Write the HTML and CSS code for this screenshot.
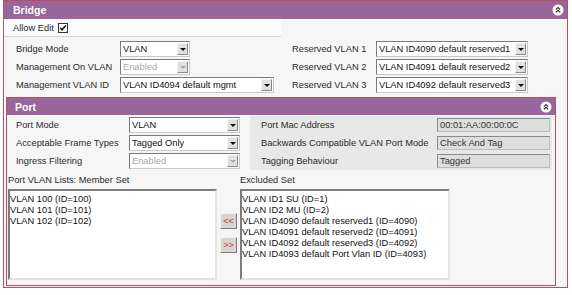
FILE: index.html
```html
<!DOCTYPE html>
<html lang="en">
<head>
  <meta charset="UTF-8">
  <title>Bridge Settings</title>
  <link rel="stylesheet" href="styles.css">
</head>
<body>
  <div class="panel bridge">
    <div class="panel-head">
      <span>Bridge</span>
      <svg class="collapse" width="12" height="12" viewBox="0 0 12 12"><circle cx="6" cy="6" r="5.5" fill="#fff"/><path d="M3.8 5.6 L6 3.6 L8.2 5.6 M3.8 8.2 L6 6.2 L8.2 8.2" fill="none" stroke="#333" stroke-width="1.2"/></svg>
    </div>

    <div class="allow-edit">
      Allow Edit
      <svg class="check" width="10" height="10" viewBox="0 0 10 10"><rect x="0.5" y="0.5" width="9" height="9" fill="#fff" stroke="#333"/><path d="M2.2 4.8 L4 6.8 L7.8 2.6" fill="none" stroke="#111" stroke-width="1.5"/></svg>
    </div>

    <!-- Bridge fields -->
    <div class="bridge-grid">
      <label>Bridge Mode</label>
      <div class="select short"><span>VLAN</span><i class="arrow"></i></div>
      <label>Reserved VLAN 1</label>
      <div class="select"><span>VLAN ID4090 default reserved1</span><i class="arrow"></i></div>

      <label>Management On VLAN</label>
      <div class="select short disabled"><span>Enabled</span><i class="arrow"></i></div>
      <label>Reserved VLAN 2</label>
      <div class="select"><span>VLAN ID4091 default reserved2</span><i class="arrow"></i></div>

      <label>Management VLAN ID</label>
      <div class="select mid"><span>VLAN ID4094 default mgmt</span><i class="arrow"></i></div>
      <label>Reserved VLAN 3</label>
      <div class="select"><span>VLAN ID4092 default reserved3</span><i class="arrow"></i></div>
    </div>

    <!-- Port panel -->
    <div class="panel port">
      <div class="panel-head">
        <span>Port</span>
        <svg class="collapse" width="12" height="12" viewBox="0 0 12 12"><circle cx="6" cy="6" r="5.5" fill="#fff"/><path d="M3.8 5.6 L6 3.6 L8.2 5.6 M3.8 8.2 L6 6.2 L8.2 8.2" fill="none" stroke="#333" stroke-width="1.2"/></svg>
      </div>

      <div class="port-fields">
        <div class="port-left">
          <div class="row">
            <label>Port Mode</label>
            <div class="select port-select"><span>VLAN</span><i class="arrow"></i></div>
          </div>
          <div class="row">
            <label>Acceptable Frame Types</label>
            <div class="select port-select"><span>Tagged Only</span><i class="arrow"></i></div>
          </div>
          <div class="row">
            <label>Ingress Filtering</label>
            <div class="select port-select disabled"><span>Enabled</span><i class="arrow"></i></div>
          </div>
        </div>
        <div class="port-right">
          <div class="row">
            <label>Port Mac Address</label>
            <div class="readonly">00:01:AA:00:00:0C</div>
          </div>
          <div class="row">
            <label>Backwards Compatible VLAN Port Mode</label>
            <div class="readonly">Check And Tag</div>
          </div>
          <div class="row">
            <label>Tagging Behaviour</label>
            <div class="readonly">Tagged</div>
          </div>
        </div>
      </div>

      <div class="lists">
        <div class="list-col member">
          <div class="list-title">Port VLAN Lists: Member Set</div>
          <ul class="listbox">
            <li>VLAN 100 (ID=100)</li>
            <li>VLAN 101 (ID=101)</li>
            <li>VLAN 102 (ID=102)</li>
          </ul>
        </div>
        <div class="move-btns">
          <button>&lt;&lt;</button>
          <button>&gt;&gt;</button>
        </div>
        <div class="list-col excluded">
          <div class="list-title">Excluded Set</div>
          <ul class="listbox">
            <li>VLAN ID1 SU (ID=1)</li>
            <li>VLAN ID2 MU (ID=2)</li>
            <li>VLAN ID4090 default reserved1 (ID=4090)</li>
            <li>VLAN ID4091 default reserved2 (ID=4091)</li>
            <li>VLAN ID4092 default reserved3 (ID=4092)</li>
            <li>VLAN ID4093 default Port Vlan ID (ID=4093)</li>
          </ul>
        </div>
      </div>
    </div>
  </div>
</body>
</html>
```

FILE: styles.css
```css
body {
  margin: 0;
  background-color: #fff;
  font-family: "Liberation Sans", Arial, sans-serif;
  font-size: 9.3px;
  color: #2a2a2a;
}

.panel {
  border: 1px solid #b9505a;
  background-color: #f6f6f6;
  box-sizing: border-box;
}

.bridge {
  width: 565px;
  height: 288px;
  margin-left: 3px;
}

.panel-head {
  display: flex;
  align-items: center;
  justify-content: space-between;
  height: 18px;
  padding: 0 3px 0 9px;
  background-color: #98669a;
  color: #fff;
  font-weight: bold;
  font-size: 10.5px;
}

.allow-edit {
  display: flex;
  align-items: center;
  gap: 4px;
  width: 268px;
  height: 17px;
  padding-left: 9px;
  background-color: #fcfcfc;
  border-bottom: 1px solid #d4d4d4;
}

.bridge-grid {
  display: grid;
  grid-template-columns: 104px 172px 84px 152px;
  grid-auto-rows: 18px;
  align-items: center;
  padding: 3px 0 3px 12px;
}

/* fake select boxes */
.select {
  display: flex;
  align-items: center;
  justify-content: space-between;
  height: 16px;
  box-sizing: border-box;
  border: 1px solid;
  border-color: #7a7a7a #c8c8c8 #c8c8c8 #7a7a7a;
  background-color: #fff;
  padding-left: 2px;
  color: #111;
  white-space: nowrap;
  overflow: hidden;
}

.select span {
  overflow: hidden;
}

.select.short {
  width: 70px;
}

.select.mid {
  width: 154px;
}

.select.disabled {
  color: #a8a8a8;
}

.arrow {
  position: relative;
  flex: none;
  width: 11px;
  height: 12px;
  margin-right: 1px;
  box-sizing: border-box;
  border: 1px solid;
  border-color: #f4f4f4 #8a8a8a #8a8a8a #f4f4f4;
  background-color: #e2e0dc;
}

.arrow::after {
  content: "";
  position: absolute;
  left: 2px;
  top: 4px;
  border-left: 3px solid transparent;
  border-right: 3px solid transparent;
  border-top: 3px solid #111;
}

.disabled .arrow::after {
  border-top-color: #aaa;
}

.port {
  width: 550px;
  height: 189px;
  margin-left: 2px;
  background-color: #f6f6f6;
}

.port .panel-head {
  height: 17px;
  padding-left: 8px;
}

.port-fields {
  display: flex;
  margin-top: 1px;
}

.port-left {
  width: 243px;
  padding-left: 9px;
  box-sizing: border-box;
}

.port-right {
  width: 302px;
  padding-left: 11px;
  box-sizing: border-box;
  background-color: #e8e8e8;
}

.row {
  display: flex;
  align-items: center;
  justify-content: space-between;
  height: 18px;
}

.port-select {
  width: 111px;
  margin-right: 10px;
}

.readonly {
  width: 113px;
  height: 14px;
  line-height: 12px;
  box-sizing: border-box;
  border: 1px solid;
  border-color: #8a8a8a #bdbdbd #bdbdbd #8a8a8a;
  background-color: #dedede;
  padding-left: 2px;
  margin-right: 2px;
  color: #333;
}

.lists {
  display: flex;
  align-items: flex-start;
  padding: 4px 0 0 1px;
}

.list-title {
  height: 15px;
  line-height: 12px;
}

.member .list-title {
  margin-right: -40px;
}

.listbox {
  list-style: none;
  margin: 0;
  padding: 3px 0;
  height: 91px;
  box-sizing: border-box;
  border: 2px solid;
  border-color: #7c7c7c #e6e4e0 #e6e4e0 #7c7c7c;
  background-color: #fff;
  color: #111;
  line-height: 11px;
}

.member .listbox {
  width: 209px;
}

.excluded .listbox {
  width: 210px;
}

.move-btns {
  display: flex;
  flex-direction: column;
  gap: 8px;
  padding: 39px 3px 0 3px;
}

button {
  width: 17px;
  height: 16px;
  padding: 0;
  font-family: "Liberation Sans", Arial, sans-serif;
  font-size: 9px;
  color: #c23a3a;
  background-color: #d9d6d2;
  border: 1px solid;
  border-color: #f2f2f2 #7c7c7c #7c7c7c #f2f2f2;
}
```
